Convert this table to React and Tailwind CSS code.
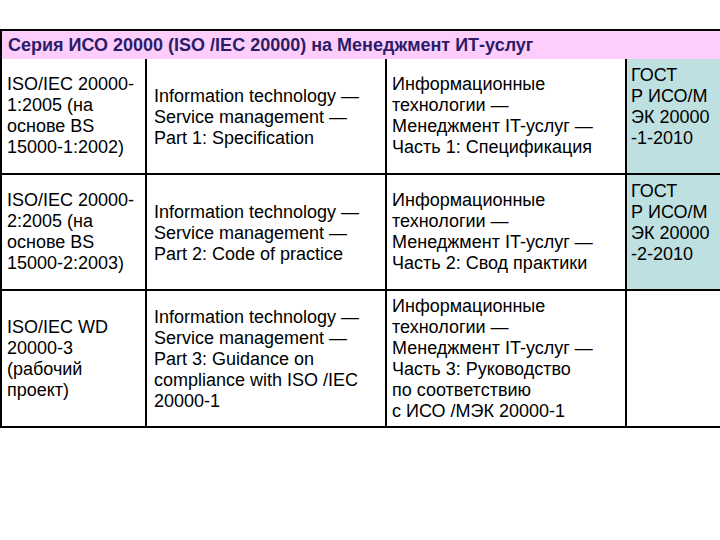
export default function App() {
  const font = { fontFamily: '"Liberation Sans", Arial, sans-serif' };
  const rows = [
    {
      h: "h-[116px]",
      a: ["ISO/IEC 20000-", "1:2005 (на", "основе BS", "15000-1:2002)"],
      b: ["Information technology —", "Service management —", "Part 1: Specification"],
      c: ["Информационные", "технологии —", "Менеджмент IT-услуг —", "Часть 1: Спецификация"],
      d: ["ГОСТ", "Р ИСО/М", "ЭК 20000", "-1-2010"],
    },
    {
      h: "h-[116px]",
      a: ["ISO/IEC 20000-", "2:2005 (на", "основе BS", "15000-2:2003)"],
      b: ["Information technology —", "Service management —", "Part 2: Code of practice"],
      c: ["Информационные", "технологии —", "Менеджмент IT-услуг —", "Часть 2: Свод практики"],
      d: ["ГОСТ", "Р ИСО/М", "ЭК 20000", "-2-2010"],
    },
    {
      h: "h-[137px]",
      a: ["ISO/IEC WD", "20000-3", "(рабочий", "проект)"],
      b: ["Information technology —", "Service management —", "Part 3: Guidance on", "compliance with ISO /IEC", "20000-1"],
      c: ["Информационные", "технологии —", "Менеджмент IT-услуг —", "Часть 3: Руководство", "по соответствию", "с ИСО /МЭК 20000-1"],
      d: null,
    },
  ];
  const Lines = ({ items }) => (
    <div className="leading-[21px]">
      {items.map((t, i) => (
        <div key={i} className="whitespace-nowrap">{t}</div>
      ))}
    </div>
  );
  return (
    <div className="w-[720px] h-[540px] bg-white overflow-hidden text-black" style={font}>
      <div className="mt-[29px] border-t-2 border-l-2 border-black">
        <div className="h-[28px] bg-[#fdcdfb] flex items-center pl-[6px] text-[18px] font-bold text-[#2c1c68] whitespace-nowrap">
          Серия ИСО 20000 (ISO /IEC 20000) на Менеджмент ИТ-услуг
        </div>
        {rows.map((r, i) => (
          <div key={i} className={`grid grid-cols-[145px_240px_240px_1fr] border-b-2 border-black text-[18px] ${r.h}`}>
            <div className="border-r-2 border-black flex items-center pl-[5px]">
              <Lines items={r.a} />
            </div>
            <div className="border-r-2 border-black flex items-center pl-[7px] pt-[2px]">
              <Lines items={r.b} />
            </div>
            <div className="border-r-2 border-black flex items-center pl-[5px]">
              <Lines items={r.c} />
            </div>
            <div className={`flex items-center pl-[4px] pb-[18px] ${r.d ? "bg-[#bfe0e0]" : "bg-white"}`}>
              {r.d && <Lines items={r.d} />}
            </div>
          </div>
        ))}
      </div>
    </div>
  );
}
